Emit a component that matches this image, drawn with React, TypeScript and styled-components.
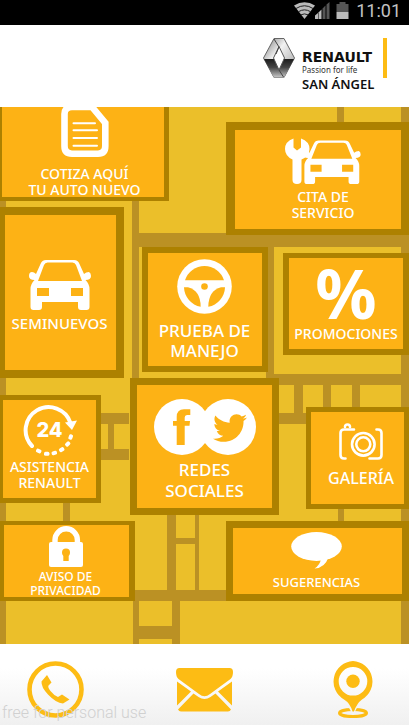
import React from "react";
import styled, { createGlobalStyle } from "styled-components";
import { FaTwitter } from "react-icons/fa";

const ORANGE = "#fdb215";
const EDGE = "#ad8100";
const GOLD = "#fdbc14";

const GlobalStyle = createGlobalStyle`
  *, *::before, *::after { box-sizing: border-box; }
  body { margin: 0; background: #fff; font-family: "Noto Sans", "Open Sans", sans-serif; }
  svg { display: block; flex: none; }
`;

const Page = styled.div`
  display: flex;
  flex-direction: column;
  min-height: 100vh;
`;

const StatusBar = styled.div`
  display: flex;
  align-items: center;
  justify-content: flex-end;
  height: 25px;
  padding: 0 8px 4px;
  background: #000;
`;

const Clock = styled.time`
  margin-left: 7px;
  color: #c3c3c3;
  font: 400 18px/20px Roboto, sans-serif;
`;

const Header = styled.header`
  display: flex;
  justify-content: flex-end;
  height: 82px;
  padding: 13px 22px 0 0;
`;

const Brand = styled.div`
  width: 72px;
  margin: 11px 9px 0 7px;
  color: #111;
  white-space: nowrap;
`;

const BrandName = styled.div`
  font: 700 14px/17px "DejaVu Sans", sans-serif;
`;

const Slogan = styled.div`
  color: #333;
  font-size: 8px;
  line-height: 8px;
`;

const Branch = styled.div`
  font-size: 13px;
  font-weight: 600;
  line-height: 20px;
`;

const AccentBar = styled.div`
  width: 4px;
  height: 40px;
  background: ${GOLD};
`;

const MapArea = styled.main`
  position: relative;
  display: grid;
  flex: 1 0 auto;
  min-height: 537px;
  background: #ebbf2a;
  overflow: hidden;
`;

const Streets = styled.svg`
  position: absolute;
  inset: 0;
  width: 100%;
  height: 100%;
`;

const Stack = styled.nav<{ $side: "start" | "center" | "end"; $top?: number }>`
  grid-area: 1 / 1;
  justify-self: ${(p) => p.$side};
  position: relative;
  display: flex;
  flex-direction: column;
  align-items: ${(p) => (p.$side === "center" ? "center" : "flex-" + p.$side)};
  padding-top: ${(p) => p.$top ?? 0}px;
  pointer-events: none;
`;

const TileButton = styled.button<{
  $w: number;
  $h: number;
  $edge: string;
  $pad: string;
  $gap: number;
  $before: number;
}>`
  display: flex;
  flex-direction: column;
  align-items: center;
  justify-content: flex-start;
  gap: ${(p) => p.$gap}px;
  width: ${(p) => p.$w}px;
  height: ${(p) => p.$h}px;
  margin: ${(p) => p.$before}px 0 0;
  padding: ${(p) => p.$pad};
  border: solid ${EDGE};
  border-width: ${(p) => p.$edge};
  background: ${ORANGE};
  color: #fff;
  font-family: inherit;
  cursor: pointer;
  pointer-events: auto;
`;

const Label = styled.span<{ $size: number; $line: number }>`
  display: flex;
  flex-direction: column;
  align-items: center;
  font-size: ${(p) => p.$size}px;
  font-weight: 500;
  line-height: ${(p) => p.$line}px;
  white-space: nowrap;
`;

const Percent = styled.span`
  height: 53px;
  font: 700 68px/53px "Noto Sans", sans-serif;
`;

const Footer = styled.footer`
  position: relative;
  display: flex;
  justify-content: space-between;
  height: 81px;
  padding: 17px 28px 0 27px;
  background: linear-gradient(#fff 30%, #f0f0f0);
`;

const FooterButton = styled.button`
  display: flex;
  justify-content: center;
  align-items: flex-start;
  width: 57px;
  height: 58px;
  padding: 0;
  border: 0;
  background: none;
  cursor: pointer;
`;

const Watermark = styled.span`
  position: absolute;
  left: 2px;
  bottom: 2px;
  color: #d0d0d0;
  font: 300 16px/20px Roboto, sans-serif;
  pointer-events: none;
`;

const CAR =
  "M17 0H45Q49 0 50.500 4L55 14Q57 12 60 12Q62 13 62 16Q62 20 56.500 20Q60.500 24 60.500 29V47Q60.500 50 57.500 50H52Q49 50 49 47V42H13V47Q13 50 10 50H4.500Q1.500 50 1.500 47V29Q1.500 24 5.500 20Q0 20 0 16Q0 12 3 12Q5 12 7 14L11.500 4Q13 0 17 0Z" +
  "M18.500 2.500H43.500Q46 2.500 47 5L53 21H9L15 5Q16 2.500 18.500 2.500ZM8 28h12v8h-12zM42 28h12v8h-12z";

const DocumentIcon = () => (
  <svg width="48" height="50" viewBox="0 0 48 50" fill="none" stroke="#fff">
    <path strokeWidth="6.600" d="M31 0H11Q3.500 0 3.500 7V39Q3.500 46.700 11 46.700H37Q44.300 46.700 44.300 39V16Z" />
    <path strokeWidth="2" strokeLinecap="round" d="M12.500 16.300H34M12.500 23.300H36M12.500 31H36M12.500 38.700H36" />
  </svg>
);

const ServiceIcon = () => (
  <svg width="77" height="46" viewBox="0 0 77 46" fill="#fff">
    <path d="M8.500 0.500V9.500L12 12.500L16 9.500V0.500Q24.500 3.500 24.500 11Q24.500 18 16.500 21.500V42Q16.500 46 12 46Q7.500 46 7.500 42V21.500Q0 18 0 11Q0 3.500 8.500 .5Z" />
    <path fillRule="evenodd" transform="translate(18 2.500) scale(.93 .87)" d={CAR} />
  </svg>
);

const CarIcon = () => (
  <svg width="62" height="50" viewBox="0 0 62 50" fill="#fff">
    <path fillRule="evenodd" d={CAR} />
  </svg>
);

const WheelIcon = () => (
  <svg width="55" height="55" viewBox="-27.500 -27.500 55 55">
    <circle r="27.300" fill="#fff" />
    <g fill={ORANGE}>
      <path d="M-19.500 -6.300A20.500 20.500 0 0 1 19.500 -6.300Z" />
      <path d="M-20.500 .8A20.500 20.500 0 0 0 -3.800 20.300Q-4 4 -16.500 .8Z" />
      <path d="M20.500 .8A20.500 20.500 0 0 1 3.800 20.300Q4 4 16.500 .8Z" />
      <circle r="3.300" />
    </g>
  </svg>
);

const AssistIcon = () => (
  <svg width="54" height="54" viewBox="0 0 54 54" fill="#fff">
    <path d="M9 42A23 23 0 1 1 47.500 19" fill="none" stroke="#fff" strokeWidth="4" strokeLinecap="round" />
    <path d="M42 18.500L54 16.500L49 26Z" />
    {[[47.700, 33, 110], [44.700, 40, 135], [38.700, 45.700, 150], [31.300, 49, 165], [23.700, 49.700, 180], [15.700, 47, 205]].map(
      ([x, y, r]) => (
        <rect key={r} x="-2.700" y="-2" width="5.400" height="4" rx="1.500" transform={`translate(${x} ${y}) rotate(${r})`} />
      )
    )}
    <text x="26.500" y="33" textAnchor="middle" fontFamily="Inter, sans-serif" fontWeight="800" fontSize="20">
      24
    </text>
  </svg>
);

const SocialIcon = () => (
  <svg width="102" height="56" viewBox="0 0 102 56">
    <circle cx="28" cy="28" r="28" fill="#fff" />
    <circle cx="74" cy="28" r="28" fill="#fff" />
    <path
      fill={ORANGE}
      d="M22.700 46V26.700H19V22H22.700V18Q22.700 10.300 30 10.300H36.300V16H33Q30.700 16 30.700 18.500V22H36L35.500 26.700H30.700V46Z"
    />
    <FaTwitter x="59" y="12" size={34} color={ORANGE} />
  </svg>
);

const CameraIcon = () => (
  <svg width="44" height="37" viewBox="0 0 44 37" fill="none" stroke="#fff" strokeWidth="2.600" strokeLinecap="round">
    <path d="M15 6.500H5Q1.500 6.500 1.500 10V32Q1.500 35.500 5 35.500H6.500M37.500 6.500H39Q42.500 6.500 42.500 10V32Q42.500 35.500 39 35.500H30.500" />
    <path d="M6 4Q6 1.500 8.500 1.500Q11 1.500 11 4" />
    <circle cx="24.300" cy="21.300" r="11.300" />
    <circle cx="24.300" cy="21.300" r="7" />
  </svg>
);

const LockIcon = () => (
  <svg width="34" height="41" viewBox="0 0 34 41">
    <path d="M6 18V14A11.200 11.200 0 0 1 28.400 14V18" fill="none" stroke="#fff" strokeWidth="5.400" />
    <rect y="16" width="34" height="25" rx="2" fill="#fff" />
    <circle cx="17" cy="26.500" r="4" fill={ORANGE} />
    <rect x="14.300" y="27" width="5.400" height="8" fill={ORANGE} />
  </svg>
);

const BubbleIcon = () => (
  <svg width="51" height="37" viewBox="0 0 51 37" fill="#fff">
    <ellipse cx="25.500" cy="14.500" rx="25.300" ry="14.400" />
    <path d="M30 27Q29 33 23.500 36.500Q34 36 37.500 25Z" />
  </svg>
);

const PhoneIcon = () => (
  <svg width="57" height="57" viewBox="0 0 57 57">
    <circle cx="28.500" cy="28.500" r="26" fill="none" stroke={GOLD} strokeWidth="4.600" />
    <path
      fill={GOLD}
      d="M20 14L14.500 20.500Q14 26 21 33.500Q29 42 36 42.500L42.500 38.500L35 33.500L31 36Q27 34.500 23.500 30Q20.500 26 21.500 24.500L24.500 21.500Z"
    />
  </svg>
);

const MailIcon = () => (
  <svg width="57" height="51" viewBox="0 -7 57 51" fill={GOLD}>
    <path d="M3.500 0H53.500Q57 0 57 4Q57 9 54.500 11L34 26Q28.500 30.500 23 26L2.500 11Q0 9 0 4Q0 0 3.500 0Z" />
    <path d="M1 13.500L15 23.500L1 37.500ZM56 13.500L42 23.500L56 37.500Z" />
    <path d="M17.500 25.500L22.500 29Q28.500 33 34.500 29L39.500 25.500L55 41.500Q54 43.500 52 43.500H5Q3 43.500 2 41.500Z" />
  </svg>
);

const PinIcon = () => (
  <svg width="42" height="58" viewBox="0 0 42 58">
    <ellipse cx="21" cy="52" rx="13.500" ry="3.600" fill="none" stroke={GOLD} strokeWidth="3" />
    <path d="M14 38L21 51L28 38Z" fill="#f5f5f5" stroke="#f5f5f5" strokeWidth="3" />
    <path
      fill={GOLD}
      fillRule="evenodd"
      d="M21 0A20.600 20.600 0 0 1 30 38.500Q25 42 22 50.500H20.500Q18 42 12 38.500A20.600 20.600 0 0 1 21 0ZM21 6A14.300 14.300 0 1 0 21 34.600A14.300 14.300 0 1 0 21 6Z"
    />
    <circle cx="21" cy="20.300" r="6.700" fill={GOLD} />
  </svg>
);

const RenaultMark = () => (
  <svg width="32" height="40" viewBox="0 0 32 40">
    <defs>
      <linearGradient id="chromeTop" x1="0" y1="0" x2="1" y2="1">
        <stop offset="0" stopColor="#777" />
        <stop offset="0.400" stopColor="#f2f2f2" />
        <stop offset="1" stopColor="#999" />
      </linearGradient>
      <linearGradient id="chromeBottom" x1="0" y1="0" x2="0" y2="1">
        <stop offset="0" stopColor="#1c1c1c" />
        <stop offset="0.450" stopColor="#444" />
        <stop offset="1" stopColor="#c9c9c9" />
      </linearGradient>
    </defs>
    <path d="M11 .5H21L31.500 20L21 39.500H11L.5 20Z" fill="url(#chromeTop)" stroke="#666" />
    <path d="M1 21H31L21 39.500H11Z" fill="url(#chromeBottom)" />
    <path d="M16 8.500L21.500 20L16 32L10.500 20Z" fill="#fff" stroke="#555" />
    <path d="M11 1L16 9L13 16M16 32L20.500 39" fill="none" stroke="#444" />
  </svg>
);

const SignalIcons = () => (
  <svg width="55" height="17" viewBox="0 0 55 17">
    <path d="M0 3.500Q10.500 -3 21 3.500L10.500 17Z" fill="#bbb" />
    <path d="M2 6.500Q10.500 1 19 6.500M4.500 9.700Q10.500 6 16.500 9.700M7 12.800Q10.500 11 14 12.800" fill="none" stroke="#222" strokeWidth="1" />
    <path d="M21 17V13.500L24 11V17Z" fill="#bbb" />
    <path d="M24.500 17V10.500L27.500 7.500V17Z" fill="#bbb" />
    <path d="M28.500 17V6.500L31.500 3.500V17ZM32.500 17V2.500L35.500 0V17Z" fill="#555" />
    <path d="M42.500 2H45.500V0H51.500V2H54.500V10H42.500Z" fill="#555" />
    <path d="M42.500 10H54.500V17H42.500Z" fill="#bbb" />
  </svg>
);

const STREET_RECTS = [
  [0, 0, 6, 537],
  [132, 0, 7, 271],
  [337, 0, 7, 15],
  [401, 0, 8, 537],
  [132, 126, 277, 14],
  [266, 126, 8, 145],
  [274, 267, 135, 11],
  [274, 306, 127, 11],
  [294, 278, 9, 28],
  [323, 278, 8, 28],
  [352, 278, 8, 28],
  [101, 306, 28, 11],
  [101, 342, 28, 11],
  [108, 317, 6, 25],
  [63, 396, 7, 18],
  [338, 402, 6, 12],
  [167, 408, 9, 75],
  [195, 408, 4, 75],
  [176, 431, 19, 6],
  [135, 483, 274, 11],
  [133, 494, 6, 43],
  [172, 494, 8, 43],
  [139, 519, 33, 13],
];

interface TileProps {
  icon: React.ReactNode;
  lines: string[];
  w: number;
  h: number;
  edge: string;
  pad: string;
  gap: number;
  before?: number;
  size: number;
  line: number;
}

const Tile = ({ icon, lines, w, h, edge, pad, gap, before = 0, size, line }: TileProps) => (
  <TileButton type="button" $w={w} $h={h} $edge={edge} $pad={pad} $gap={gap} $before={before}>
    {icon}
    <Label $size={size} $line={line}>
      {lines.map((text) => (
        <span key={text}>{text}</span>
      ))}
    </Label>
  </TileButton>
);

export default function App() {
  return (
    <Page>
      <GlobalStyle />
      <StatusBar>
        <SignalIcons />
        <Clock>11:01</Clock>
      </StatusBar>
      <Header>
        <RenaultMark />
        <Brand>
          <BrandName>RENAULT</BrandName>
          <Slogan>Passion for life</Slogan>
          <Branch>SAN ÁNGEL</Branch>
        </Brand>
        <AccentBar />
      </Header>
      <MapArea>
        <Streets viewBox="0 0 409 537" preserveAspectRatio="none" fill="#bb9124" aria-hidden="true">
          {STREET_RECTS.map(([x, y, w, h]) => (
            <rect key={`${x}-${y}-${w}`} x={x} y={y} width={w} height={h} />
          ))}
        </Streets>
        <Stack $side="start">
          <Tile icon={<DocumentIcon />} lines={["COTIZA AQUÍ", "TU AUTO NUEVO"]} w={169} h={94} edge="0 5px 4px 2px" pad="0 0 0 3px" gap={9} size={14} line={16} />
          <Tile icon={<CarIcon />} lines={["SEMINUEVOS"]} w={124} h={171} edge="8px 8px 8px 5px" pad="45px 2px 0 0" gap={3} before={6} size={15} line={20} />
          <Tile icon={<AssistIcon />} lines={["ASISTENCIA", "RENAULT"]} w={101} h={108} edge="5px 5px 5px 3px" pad="4px 0 0" gap={1} before={17} size={14} line={16} />
          <Tile icon={<LockIcon />} lines={["AVISO DE", "PRIVACIDAD"]} w={135} h={80} edge="4px 6px 4px 4px" pad="1px 2px 0 0" gap={3} before={18} size={12} line={14} />
        </Stack>
        <Stack $side="center" $top={140}>
          <Tile icon={<WheelIcon />} lines={["PRUEBA DE", "MANEJO"]} w={126} h={125} edge="6px" pad="6px 0 0" gap={7} size={17} line={20} />
          <Tile icon={<SocialIcon />} lines={["REDES", "SOCIALES"]} w={149} h={137} edge="7px" pad="14px 0 0" gap={4} before={6} size={17} line={21} />
        </Stack>
        <Stack $side="end" $top={15}>
          <Tile icon={<ServiceIcon />} lines={["CITA DE", "SERVICIO"]} w={183} h={113} edge="8px 8px 6px 9px" pad="8px 0 0 10px" gap={5} size={14} line={16} />
          <Tile icon={<Percent>%</Percent>} lines={["PROMOCIONES"]} w={126} h={102} edge="5px 6px 6px 6px" pad="8px 0 0" gap={7} before={18} size={14} line={16} />
          <Tile icon={<CameraIcon />} lines={["GALERÍA"]} w={103} h={102} edge="5px" pad="11px 0 0 7px" gap={8} before={52} size={16} line={20} />
          <Tile icon={<BubbleIcon />} lines={["SUGERENCIAS"]} w={183} h={80} edge="7px" pad="4px 2px 0 0" gap={5} before={12} size={13} line={16} />
        </Stack>
      </MapArea>
      <Footer>
        <FooterButton type="button" aria-label="Llamar">
          <PhoneIcon />
        </FooterButton>
        <FooterButton type="button" aria-label="Correo">
          <MailIcon />
        </FooterButton>
        <FooterButton type="button" aria-label="Ubicación">
          <PinIcon />
        </FooterButton>
        <Watermark>free for personal use</Watermark>
      </Footer>
    </Page>
  );
}
